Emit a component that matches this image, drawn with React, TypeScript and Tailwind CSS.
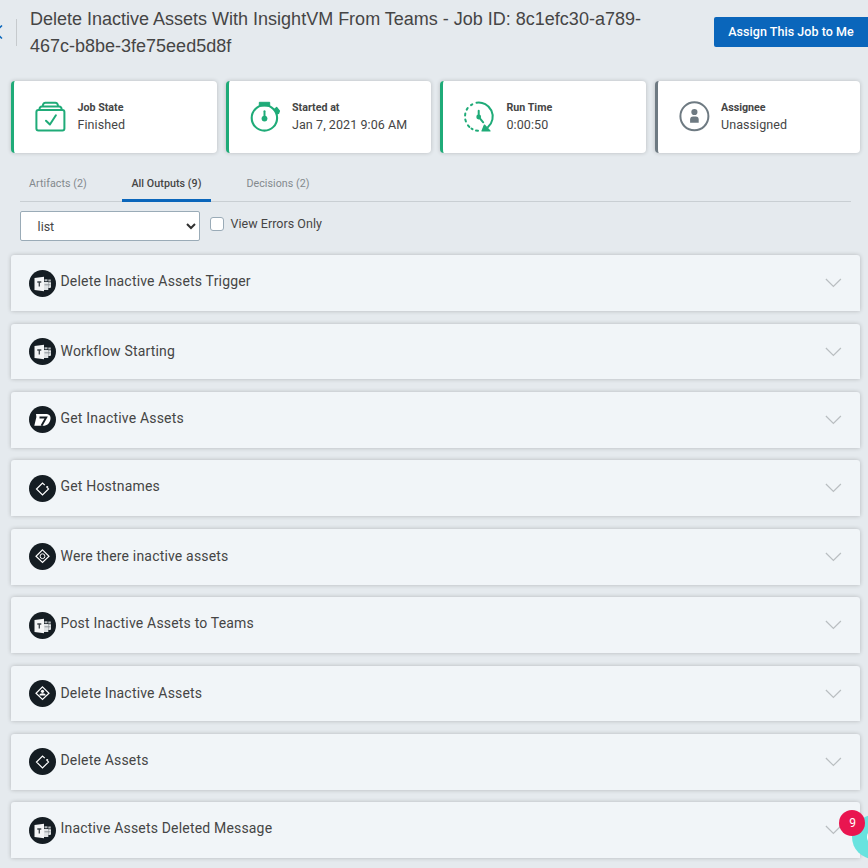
import React from "react";

type IconKind = "teams" | "rapid7" | "loop" | "decision" | "human";

interface Output {
  label: string;
  icon: IconKind;
  tall?: boolean;
}

const outputs: Output[] = [
  { label: "Delete Inactive Assets Trigger", icon: "teams" },
  { label: "Workflow Starting", icon: "teams", tall: true },
  { label: "Get Inactive Assets", icon: "rapid7" },
  { label: "Get Hostnames", icon: "loop" },
  { label: "Were there inactive assets", icon: "decision", tall: true },
  { label: "Post Inactive Assets to Teams", icon: "teams" },
  { label: "Delete Inactive Assets", icon: "human", tall: true },
  { label: "Delete Assets", icon: "loop" },
  { label: "Inactive Assets Deleted Message", icon: "teams" },
];

function StepIcon({ kind }: { kind: IconKind }) {
  return (
    <div className="h-[27px] w-[27px] shrink-0 rounded-full bg-[#151d23]">
      <svg viewBox="0 0 27 27" className="block h-[27px] w-[27px]" fill="none">
        {kind === "teams" && (
          <g>
            <path d="M15 12h4.300v8H15zM19.500 12.300h2.500v4.700q0 1-1 1h-1.500z" fill="#dfe2e4" />
            <path d="M15.500 9.300h3v2h-3zM19.300 9.500h2.500v2h-2.500z" fill="#b4b9bc" />
            <path d="M15.500 14.800h6" stroke="#7b8287" strokeWidth=".8" />
            <path d="M5.500 8l9.500-1.300v14.600L5.500 20z" fill="#f4f5f6" />
            <path d="M8.300 12h4M10.300 12v4.600" stroke="#3c4348" strokeWidth="1.300" />
          </g>
        )}
        {kind === "rapid7" && (
          <g>
            <path d="M7 7.900h9.200c4 0 5.800 1.900 5.300 5.100-.6 4.200-3.300 6.800-7.300 6.800H5.300L7.400 11z" fill="#fff" />
            <path d="M10.500 11.500h6.700l-4.700 8.300" stroke="#151d23" strokeWidth="1.900" />
          </g>
        )}
        {kind === "loop" && (
          <g>
            <path d="M15.800 10.100l-2.300-2.100-6 6 6 6 6-6-1-1" stroke="#fff" strokeWidth="1.200" />
            <circle cx="18.200" cy="12" r="1.100" fill="#fff" />
          </g>
        )}
        {kind === "decision" && (
          <g stroke="#fff">
            <path d="M13.500 6.900l6.500 6.300-6.500 6.300L7 13.200z" strokeWidth="1.200" />
            <circle cx="13.500" cy="13.200" r="2.400" strokeWidth="1" />
          </g>
        )}
        {kind === "human" && (
          <g>
            <path d="M13.500 6.900l6.500 6.300-6.500 6.300L7 13.200z" stroke="#fff" strokeWidth="1.200" />
            <circle cx="13.500" cy="11.300" r="1.600" fill="#fff" />
            <path d="M10.300 15.600q.2-2.400 3.200-2.400t3.200 2.400z" fill="#fff" />
          </g>
        )}
      </svg>
    </div>
  );
}

function StateIcon() {
  return (
    <svg viewBox="-0.4 0 32 32" className="h-8 w-8" fill="none" stroke="#1fab78" strokeWidth="2">
      <rect x="2" y="10" width="28" height="20.500" rx="2" />
      <path d="M5 9.300q.3-2.800 2.500-2.800h17.300q2.200 0 2.500 2.800" strokeWidth="1.900" />
      <path d="M8.300 6q.5-3.300 2.700-3.300h10q2.200 0 2.700 3.300" strokeWidth="1.900" />
      <path d="M11.600 20.700l3.900 3.800 6-9.200" strokeLinecap="round" strokeLinejoin="round" />
    </svg>
  );
}

function StopwatchIcon() {
  return (
    <svg viewBox="0 0 32 32" className="h-8 w-8" fill="none">
      <circle cx="15.400" cy="17.900" r="12.700" stroke="#1fab78" strokeWidth="2.100" />
      <path d="M10.300 2.300h10.400V6H10.300z" fill="#1fab78" stroke="#1fab78" strokeLinejoin="round" />
      <path d="M25.400 9.600l2.300-2 2.600 3.300-.8 2.300-1.600.5z" fill="#1fab78" stroke="#1fab78" strokeWidth="1.500" strokeLinejoin="round" />
      <path d="M15.500 11.300v7.500" stroke="#1fab78" strokeWidth="2" strokeLinecap="round" />
      <circle cx="15.500" cy="18.600" r="2.900" fill="#1fab78" />
    </svg>
  );
}

function RunTimeIcon() {
  return (
    <svg viewBox="0 0 32 32" className="h-8 w-8" fill="none" stroke="#1fab78" strokeWidth="2">
      <path d="M13.500 2.700A14 14 0 0 1 25 27" strokeLinecap="round" />
      <path d="M9.300 4.300L8 5.100M4.700 8L3.700 9.600M2.300 13.500L2.100 15.500M2.300 19.500L2.900 21.500M5 25.300L6.300 26.900M8.500 28.600L9.500 29.200M13 30.500L15 30.700" strokeLinecap="round" />
      <path d="M19 31l2.400-6 5.600 6z" fill="#1fab78" strokeWidth="1.200" strokeLinejoin="round" />
      <path d="M15.700 10.700V17l4.500 5.300" strokeLinecap="round" />
      <circle cx="15.700" cy="17" r="2.400" fill="#1fab78" stroke="none" />
    </svg>
  );
}

function PersonIcon() {
  return (
    <svg viewBox="-0.4 0.2 32 32" className="h-8 w-8" fill="#6e7a82">
      <circle cx="16" cy="16.500" r="14" fill="none" stroke="#6e7a82" strokeWidth="2" />
      <circle cx="16" cy="12.200" r="3.100" />
      <path d="M11.700 23v-3.300q0-3 3-3h2.600q3 0 3 3V23z" />
    </svg>
  );
}

interface StatProps {
  title: string;
  value: string;
  muted?: boolean;
  children: React.ReactNode;
}

function Stat({ title, value, muted, children }: StatProps) {
  return (
    <div
      className={`flex h-[72px] items-center rounded-[4px] border-l-[3px] bg-white pb-[2px] pl-[20px] shadow-[0_0_4px_rgba(0,0,0,0.2)] ${
        muted ? "border-[#6e7a82]" : "border-[#1fab78]"
      }`}
    >
      {children}
      <div className="ml-[11.500px] whitespace-nowrap">
        <div className="text-[10.700px] leading-[17px] font-bold">{title}</div>
        <div className="text-[12.500px] leading-[18px] tracking-[0.080px]">{value}</div>
      </div>
    </div>
  );
}

export default function App() {
  return (
    <div className="relative h-[868px] w-[868px] overflow-hidden bg-[#e5eaee] font-['Roboto',sans-serif] text-[#454545]">
      <header className="flex h-[81px] items-start justify-between">
        <div className="flex">
          <svg viewBox="0 0 16 20" className="mt-[22px] h-5 w-4" fill="none">
            <path d="M2 3.500L-5 10l7 6.500" stroke="#0a66bb" strokeWidth="1.500" />
          </svg>
          <div className="mt-[19px] h-[27px] w-px bg-[#c6cacd]" />
          <h1 className="ml-[13px] w-[640px] pt-[6px] font-['Liberation_Sans',Arial,sans-serif] text-[18px] leading-[27px]">
            Delete Inactive Assets With InsightVM From Teams - Job ID: 8c1efc30-a789-
            <br />
            467c-b8be-3fe75eed5d8f
          </h1>
        </div>
        <button className="mt-[17px] h-[30px] w-[154px] shrink-0 rounded-l-[2px] bg-[#0a66bb] text-[12.500px] font-medium tracking-[0.050px] whitespace-nowrap text-white">
          Assign This Job to Me
        </button>
      </header>

      <section className="mr-2 ml-[11px] grid grid-cols-4 gap-[9px]">
        <Stat title="Job State" value="Finished"><StateIcon /></Stat>
        <Stat title="Started at" value="Jan 7, 2021 9:06 AM"><StopwatchIcon /></Stat>
        <Stat title="Run Time" value="0:00:50"><RunTimeIcon /></Stat>
        <Stat title="Assignee" value="Unassigned" muted><PersonIcon /></Stat>
      </section>

      <nav className="mt-[13px] mr-[17px] ml-5 flex h-9 border-b border-[#c9cfd3] text-[10.700px] leading-[35px] text-[#83898d]">
        <div className="w-[102px] pl-[9px] tracking-[0.050px]">Artifacts (2)</div>
        <div className="h-9 w-[89px] border-b-[3px] border-[#0a66bb] text-center font-medium tracking-[0.060px] text-[#454545]">All Outputs (9)</div>
        <div className="pl-[35.400px] tracking-[0.050px]">Decisions (2)</div>
      </nav>

      <div className="mt-[9px] ml-5 flex h-[30px]">
        <div className="flex w-[180px] items-center justify-between rounded-[2px] border border-[#9aabb7] bg-white pr-[3px] pl-[16.600px] text-[12.500px]">
          <span className="pt-[3px]">list</span>
          <svg viewBox="0 0 10 8" className="h-2 w-[10px]" fill="none">
            <path d="M1 2l4 4 4-4" stroke="#303030" strokeWidth="2" />
          </svg>
        </div>
        <label className="ml-[10px] flex h-[26px] items-center text-[12.500px] tracking-[0.030px]">
          <span className="mr-[6.500px] h-[14px] w-[14px] rounded-[3px] border border-[#9aabb7] bg-white" />
          View Errors Only
        </label>
      </div>

      <main className="mt-[14.200px] mr-2 ml-[11px] flex flex-col gap-[12.600px]">
        {outputs.map((o) => (
          <div
            key={o.label}
            className="flex h-[55.800px] shrink-0 items-start rounded-t-[3px] bg-[#f1f5f8] pt-[14.400px] pr-[18px] pl-[18px] shadow-[0_0_4px_rgba(0,0,0,0.22)]"
          >
            <StepIcon kind={o.icon} />
            <span className={`mt-[-0.400px] ml-[4.500px] text-[14px] leading-[24px] tracking-[0.180px] ${o.tall ? "pt-px" : ""}`}>{o.label}</span>
            <svg viewBox="-0.4 0 18 10" className="mt-[8.600px] ml-auto h-[10px] w-[18px]" fill="none">
              <path d="M1.500 1l7.500 7.500L16.500 1" stroke="#b9bec1" strokeWidth="1.200" />
            </svg>
          </div>
        ))}
      </main>

      <div className="absolute top-[815px] left-[852px] h-11 w-11 rounded-full bg-[#68e3df]">
        <span className="absolute top-[14px] left-[15px] h-4 w-4 rounded-full bg-white" />
      </div>
      <div className="absolute top-[810px] left-[839px] flex h-[26px] w-[26px] items-center justify-center rounded-full bg-[#e91550] pl-px text-[12px] text-white">
        9
      </div>
    </div>
  );
}
